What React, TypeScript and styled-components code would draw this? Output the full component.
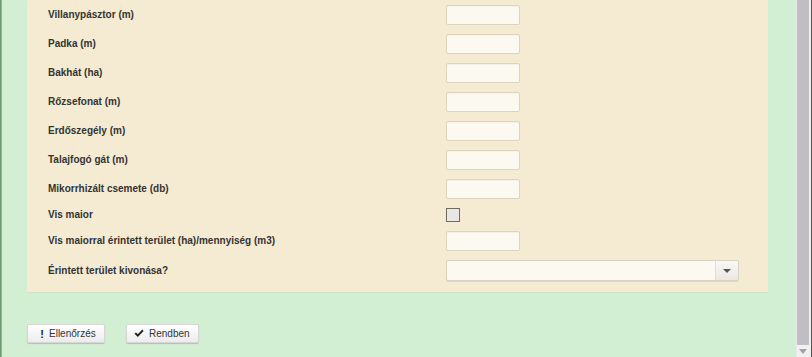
import styled, { createGlobalStyle } from "styled-components";

const GlobalStyle = createGlobalStyle`
  html, body {
    margin: 0;
    padding: 0;
    background: #d2efd3;
    overflow: hidden;
  }
`;

const Frame = styled.div`
  display: flex;
  width: 812px;
  height: 357px;
  overflow: hidden;
  font-family: "Liberation Sans", Arial, sans-serif;
`;

const EdgeLine = styled.div`
  width: 2px;
  background: linear-gradient(to right, #5d8a62, #9fc4a2);
  flex-shrink: 0;
`;

const Main = styled.div`
  flex: 1;
  background: #d2efd3;
  padding-left: 25px;
  display: flex;
  flex-direction: column;
`;

const Panel = styled.div`
  width: 741px;
  background: #f5ebd2;
  padding: 5px 0 11px 21px;
  box-sizing: border-box;
  display: flex;
  flex-direction: column;
  gap: 9px;
  box-shadow: 0 1px 1px rgba(0, 0, 0, 0.04);
`;

const Row = styled.div`
  display: flex;
  align-items: center;
`;

const Label = styled.div`
  width: 398px;
  font-size: 10px;
  line-height: 12px;
  font-weight: bold;
  color: #333;
`;

const TextInput = styled.div`
  width: 72px;
  height: 18px;
  background: #fcf9f1;
  border: 1px solid #ddd4c0;
  border-radius: 2px;
  box-shadow: inset 0 1px 1px rgba(0, 0, 0, 0.03);
`;

const Checkbox = styled.div`
  width: 12px;
  height: 12px;
  background: #e8e7e3;
  border: 1px solid #6f6b60;
`;

const Select = styled.div`
  width: 291px;
  height: 19px;
  background: #fcf9f1;
  border: 1px solid #d9d1c0;
  border-radius: 2px;
  display: flex;
  justify-content: flex-end;
  box-shadow: 0 1px 0 rgba(0, 0, 0, 0.08);
`;

const SelectArrow = styled.div`
  width: 22px;
  height: 100%;
  border-left: 1px solid #e3ded4;
  background: linear-gradient(#f9f8f6, #ebe8e3);
  display: flex;
  align-items: center;
  justify-content: center;
  &::after {
    content: "";
    border-left: 4px solid transparent;
    border-right: 4px solid transparent;
    border-top: 4px solid #555;
    margin-top: 1px;
  }
`;

const Buttons = styled.div`
  display: flex;
  gap: 21px;
  margin-top: 32px;
`;

const Button = styled.button<{ $width: number }>`
  width: ${(p) => p.$width}px;
  height: 19px;
  padding: 0 0 0 ${(p) => (p.$width > 75 ? 12 : 7)}px;
  display: flex;
  align-items: center;
  gap: 5px;
  font-family: "Liberation Sans", Arial, sans-serif;
  font-size: 10px;
  color: #333;
  background: linear-gradient(#ffffff, #ececec);
  border: 1px solid #d6d6d6;
  border-radius: 2px;
  box-shadow: 0 1px 1px rgba(0, 0, 0, 0.18);
`;

const Bang = styled.span`
  font-weight: bold;
  font-size: 11px;
  color: #222;
  width: 4px;
`;

const Scrollbar = styled.div`
  width: 16px;
  flex-shrink: 0;
  display: flex;
  background: #f1f1f1;
  border-left: 1px solid #e6ede6;
  box-sizing: border-box;
  position: relative;
`;

const Thumb = styled.div`
  width: 12px;
  height: 345px;
  background: #c1bec3;
`;

const TrackEdge = styled.div`
  flex: 1;
  border-right: 1px solid #555;
  background: #efefef;
`;

const DownArrow = styled.div`
  position: absolute;
  left: 2px;
  bottom: 3px;
  border-left: 4px solid transparent;
  border-right: 4px solid transparent;
  border-top: 5px solid #a3a3a3;
`;

const fields = [
  "Villanypásztor (m)",
  "Padka (m)",
  "Bakhát (ha)",
  "Rőzsefonat (m)",
  "Erdőszegély (m)",
  "Talajfogó gát (m)",
  "Mikorrhizált csemete (db)",
];

const App = () => {
  return (
    <>
      <GlobalStyle />
      <Frame>
        <EdgeLine />
        <Main>
          <Panel>
            {fields.map((f) => (
              <Row key={f}>
                <Label>{f}</Label>
                <TextInput />
              </Row>
            ))}
            <Row>
              <Label>Vis maior</Label>
              <Checkbox />
            </Row>
            <Row>
              <Label>Vis maiorral érintett terület (ha)/mennyiség (m3)</Label>
              <TextInput />
            </Row>
            <Row>
              <Label>Érintett terület kivonása?</Label>
              <Select>
                <SelectArrow />
              </Select>
            </Row>
          </Panel>
          <Buttons>
            <Button $width={78}>
              <Bang>!</Bang>
              Ellenőrzés
            </Button>
            <Button $width={73}>
              <svg width="10" height="9" viewBox="0 0 10 9">
                <path d="M0.5 4.8 L2 3.4 L3.8 5.2 L8.3 0.6 L9.6 2 L3.8 7.9 Z" fill="#222" />
              </svg>
              Rendben
            </Button>
          </Buttons>
        </Main>
        <Scrollbar>
          <Thumb />
          <TrackEdge />
          <DownArrow />
        </Scrollbar>
      </Frame>
    </>
  );
};

export default App;
